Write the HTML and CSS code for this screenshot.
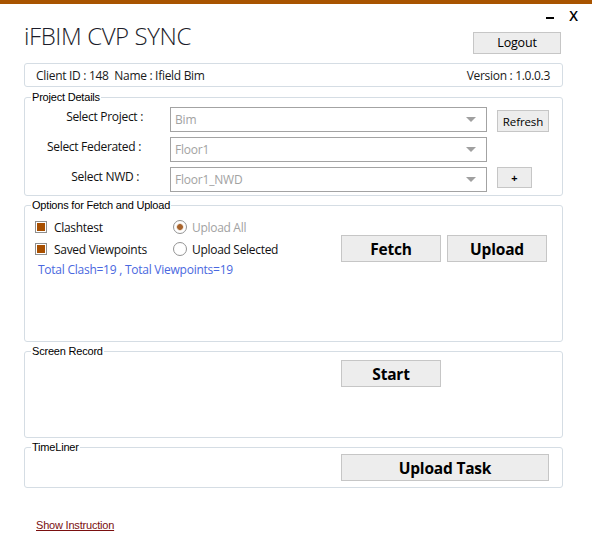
FILE: index.html
```html
<!DOCTYPE html>
<html>
<head>
<meta charset="utf-8">
<title>iFBIM CVP SYNC</title>
<link rel="stylesheet" href="styles.css">
</head>
<body>
<div class="topbar"></div>
<div class="winbar">
  <span class="win-min" title="Minimize"></span>
  <span class="win-close">X</span>
</div>
<div class="app">
  <header class="header">
    <h1 class="title">iFBIM CVP SYNC</h1>
    <button class="btn btn-logout">Logout</button>
  </header>

  <div class="infobox">
    <span>Client ID : 148&nbsp; Name : Ifield Bim</span>
    <span>Version : 1.0.0.3</span>
  </div>

  <fieldset class="group group-project">
    <legend>Project Details</legend>
    <div class="project-grid">
      <label class="field-label">Select Project :</label>
      <div class="combo"><span>Bim</span><span class="arrow"></span></div>
      <button class="btn btn-refresh">Refresh</button>

      <label class="field-label lbl-fed">Select Federated :</label>
      <div class="combo"><span>Floor1</span><span class="arrow"></span></div>
      <span></span>

      <label class="field-label lbl-nwd">Select NWD :</label>
      <div class="combo"><span>Floor1_NWD</span><span class="arrow"></span></div>
      <button class="btn btn-plus">+</button>
    </div>
  </fieldset>

  <fieldset class="group group-options">
    <legend>Options for Fetch and Upload</legend>
    <div class="options-grid">
      <div class="opt"><span class="check"></span>Clashtest</div>
      <div class="opt disabled"><span class="radio on"></span>Upload All</div>
      <div class="actions">
        <button class="btn btn-big">Fetch</button>
        <button class="btn btn-big">Upload</button>
      </div>
      <div class="opt"><span class="check"></span>Saved Viewpoints</div>
      <div class="opt"><span class="radio"></span>Upload Selected</div>
      <div class="totals">Total Clash=19 , Total Viewpoints=19</div>
    </div>
  </fieldset>

  <fieldset class="group group-record">
    <legend>Screen Record</legend>
    <div class="record-body">
      <button class="btn btn-big">Start</button>
    </div>
  </fieldset>

  <fieldset class="group group-timeliner">
    <legend>TimeLiner</legend>
    <div class="timeliner-body">
      <button class="btn btn-big btn-wide">Upload Task</button>
    </div>
  </fieldset>

  <a class="instr" href="#">Show Instruction</a>
</div>
</body>
</html>
```
FILE: styles.css
```css
* { box-sizing: border-box; }
html, body { margin: 0; padding: 0; background: #fff; }
body {
  font-family: "Open Sans", "Noto Sans", sans-serif;
  font-size: 12px;
  color: #111;
  width: 592px;
  height: 546px;
  overflow: hidden;
}
.topbar { height: 4px; background: #a85400; }

.winbar {
  height: 18px;
  display: flex;
  justify-content: flex-end;
  align-items: flex-start;
  padding-right: 14px;
}
.win-min {
  display: inline-block;
  width: 8px;
  height: 2px;
  background: #000;
  margin-top: 13px;
  margin-right: 15px;
}
.win-close {
  font-family: "Open Sans", sans-serif;
  font-weight: 600;
  font-size: 14px;
  line-height: 14px;
  color: #000;
  margin-top: 5px;
}

.app { padding: 0 29px 0 24px; }

.header {
  display: flex;
  justify-content: space-between;
  align-items: flex-start;
  height: 32px;
}
.title {
  margin: 0;
  font-family: "Open Sans", sans-serif;
  font-weight: 300;
  font-size: 24px;
  line-height: 28px;
  color: #1c1c2a;
  letter-spacing: -0.4px;
}

.btn {
  font-family: "Open Sans", sans-serif;
  background: #ededed;
  border: 1px solid #c6c6c6;
  border-radius: 0;
  color: #000;
  padding: 0;
  cursor: pointer;
}
.btn-logout {
  margin-top: 10px;
  margin-right: 2px;
  width: 88px;
  height: 22px;
  font-size: 12.5px;
  line-height: 20px;
  letter-spacing: -0.2px;
}

.infobox {
  margin-top: 9px;
  height: 24px;
  border: 1px solid #d5dde4;
  border-radius: 3px;
  display: flex;
  justify-content: space-between;
  align-items: center;
  padding: 0 12px 0 11px;
  font-size: 12px;
  letter-spacing: -0.3px;
  color: #1a1a1a;
}

.group {
  margin: 0;
  padding: 0;
  border: 1px solid #d5dde4;
  border-radius: 3px;
  min-width: 0;
}
.group legend {
  font-family: "Liberation Sans", Arial, sans-serif;
  font-size: 11px;
  line-height: 13px;
  margin-left: 6px;
  padding: 0 1px;
  letter-spacing: -0.2px;
  color: #000;
}
.group-project { margin-top: 4px; }
.group-options { margin-top: 3px; }
.group-record { margin-top: 3px; }
.group-timeliner { margin-top: 3px; }

.project-grid {
  display: grid;
  grid-template-columns: 118px 317px 52px;
  grid-auto-rows: 25px;
  column-gap: 27px;
  row-gap: 5px;
  padding: 3px 0 3px 0;
}
.project-grid > :nth-child(3n) { margin-left: -17px; }
.field-label {
  text-align: right;
  font-size: 12px;
  line-height: 16px;
  padding-top: 2px;
  letter-spacing: -0.3px;
  color: #111;
}
.lbl-fed { padding-right: 2px; }
.lbl-nwd { padding-right: 4px; }
.combo {
  border: 1px solid #a3a3a3;
  display: flex;
  justify-content: space-between;
  align-items: center;
  padding: 0 10px 0 4px;
  color: #a2a2a2;
  font-size: 12px;
  letter-spacing: -0.2px;
}
.arrow {
  width: 0; height: 0;
  border-left: 5px solid transparent;
  border-right: 5px solid transparent;
  border-top: 5px solid #a0a0a0;
}
.btn-refresh {
  align-self: end;
  width: 52px;
  height: 22px;
  font-size: 11.5px;
  letter-spacing: -0.1px;
}
.btn-plus {
  align-self: start;
  width: 35px;
  height: 21px;
  font-size: 11px;
  font-weight: bold;
  line-height: 16px;
}

.options-grid {
  display: grid;
  grid-template-columns: 138px 168px auto;
  grid-template-rows: 22px 22px 18px;
  padding: 4px 0 0 10px;
  height: 129px;
  align-content: start;
}
.opt {
  display: flex;
  align-items: center;
  font-size: 12px;
  letter-spacing: -0.3px;
  color: #111;
}
.opt.disabled { color: #a2a2a2; }
.check {
  width: 12px;
  height: 12px;
  border: 1px solid #8f8f8f;
  background: #a84f00;
  box-shadow: inset 0 0 0 1px #fff;
  margin-right: 7px;
}
.radio {
  width: 14px;
  height: 14px;
  border: 1px solid #939393;
  border-radius: 50%;
  background: #fff;
  margin-right: 5px;
}
.radio.on {
  background: radial-gradient(circle, #a8642c 0 2.5px, #e8d2c0 3.2px, #fff 4px);
}
.actions {
  grid-row: 1 / span 3;
  grid-column: 3;
  display: flex;
  gap: 6px;
  padding-top: 19px;
}
.btn-big {
  width: 100px;
  height: 27px;
  font-size: 15.5px;
  font-weight: bold;
  line-height: 24px;
  letter-spacing: -0.2px;
}
.totals {
  grid-column: 1 / span 2;
  padding-left: 3px;
  padding-top: 1px;
  font-size: 12px;
  letter-spacing: -0.25px;
  color: #4a68e0;
}

.record-body {
  height: 79px;
  padding: 2px 0 0 316px;
}
.timeliner-body {
  height: 33px;
  padding: 0 0 0 316px;
}
.btn-wide { width: 208px; }

.instr {
  display: inline-block;
  margin-top: 31px;
  margin-left: 12px;
  font-family: "Liberation Sans", Arial, sans-serif;
  font-size: 11px;
  color: #7a0f0f;
  text-decoration: underline;
  letter-spacing: -0.2px;
}
```
